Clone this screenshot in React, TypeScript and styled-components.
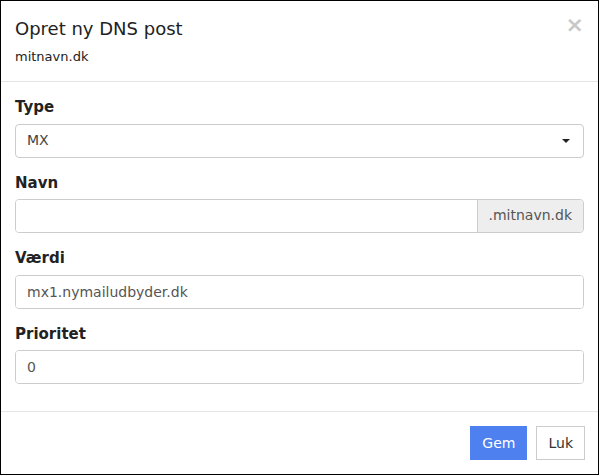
import React from "react";
import styled, { createGlobalStyle } from "styled-components";

const GlobalStyle = createGlobalStyle`
  html, body {
    margin: 0;
    padding: 0;
    background: #fff;
  }
  body {
    font-family: "DejaVu Sans", Verdana, sans-serif;
    font-size: 14px;
    line-height: 1.42857;
    color: #333;
  }
  * {
    box-sizing: border-box;
  }
`;

const Modal = styled.div`
  width: 599px;
  height: 475px;
  border: 1px solid #000;
  display: flex;
  flex-direction: column;
  background: #fff;
`;

const Header = styled.div`
  position: relative;
  padding: 15px 14px 15px;
  border-bottom: 1px solid #e5e5e5;
`;

const Title = styled.h4`
  margin: 0;
  font-size: 18px;
  font-weight: 400;
  line-height: 25px;
  color: #222;
`;

const Subtitle = styled.div`
  margin-top: 7px;
  font-size: 13px;
  line-height: 18px;
  color: #222;
`;

const Close = styled.button`
  position: absolute;
  top: 13px;
  right: 14px;
  border: 0;
  background: transparent;
  padding: 0;
  font-family: "DejaVu Sans", sans-serif;
  font-size: 22px;
  line-height: 22px;
  font-weight: 700;
  color: #c8c8c8;
  cursor: pointer;
`;

const Body = styled.div`
  padding: 15px 14px 12px;
  flex: 1;
`;

const Group = styled.div`
  margin-bottom: 15px;
`;

const Label = styled.label`
  display: block;
  margin-bottom: 5px;
  font-size: 15px;
  font-weight: 700;
  line-height: 21.5px;
  color: #222;
`;

const Field = styled.div`
  display: flex;
  height: 34px;
  border: 1px solid #ccc;
  border-radius: 4px;
  overflow: hidden;
`;

const Input = styled.input`
  flex: 1;
  min-width: 0;
  border: 0;
  outline: none;
  padding: 6px 11px;
  font-family: inherit;
  font-size: 14px;
  color: #555;
  background: #fff;
`;

const Select = styled.div`
  flex: 1;
  display: flex;
  align-items: center;
  justify-content: space-between;
  padding: 0 11px;
  font-size: 14px;
  color: #444;
`;

const Caret = styled.span`
  width: 0;
  height: 0;
  border-left: 4px solid transparent;
  border-right: 4px solid transparent;
  border-top: 4px solid #222;
  margin-right: 2px;
`;

const Addon = styled.span`
  display: flex;
  align-items: center;
  padding: 0 11px 0 10px;
  background: #eee;
  border-left: 1px solid #ccc;
  font-size: 14px;
  color: #555;
`;

const Footer = styled.div`
  display: flex;
  justify-content: flex-end;
  gap: 9px;
  padding: 14px 13px 14px;
  border-top: 1px solid #e5e5e5;
`;

const Button = styled.button<{ $primary?: boolean }>`
  height: 34px;
  padding: 0 11px;
  font-family: inherit;
  font-size: 14px;
  border: 1px solid ${(p) => (p.$primary ? "#4f80f0" : "#ccc")};
  background: ${(p) => (p.$primary ? "#4f80f0" : "#fff")};
  color: ${(p) => (p.$primary ? "#fff" : "#333")};
  cursor: pointer;
`;

const App: React.FC = () => {
  return (
    <>
      <GlobalStyle />
      <Modal>
        <Header>
          <Title>Opret ny DNS post</Title>
          <Subtitle>mitnavn.dk</Subtitle>
          <Close aria-label="Luk">×</Close>
        </Header>
        <Body>
          <Group>
            <Label>Type</Label>
            <Field>
              <Select>
                MX
                <Caret />
              </Select>
            </Field>
          </Group>
          <Group>
            <Label>Navn</Label>
            <Field>
              <Input defaultValue="" />
              <Addon>.mitnavn.dk</Addon>
            </Field>
          </Group>
          <Group>
            <Label>Værdi</Label>
            <Field>
              <Input defaultValue="mx1.nymailudbyder.dk" />
            </Field>
          </Group>
          <Group>
            <Label>Prioritet</Label>
            <Field>
              <Input defaultValue="0" />
            </Field>
          </Group>
        </Body>
        <Footer>
          <Button $primary>Gem</Button>
          <Button>Luk</Button>
        </Footer>
      </Modal>
    </>
  );
};

export default App;
